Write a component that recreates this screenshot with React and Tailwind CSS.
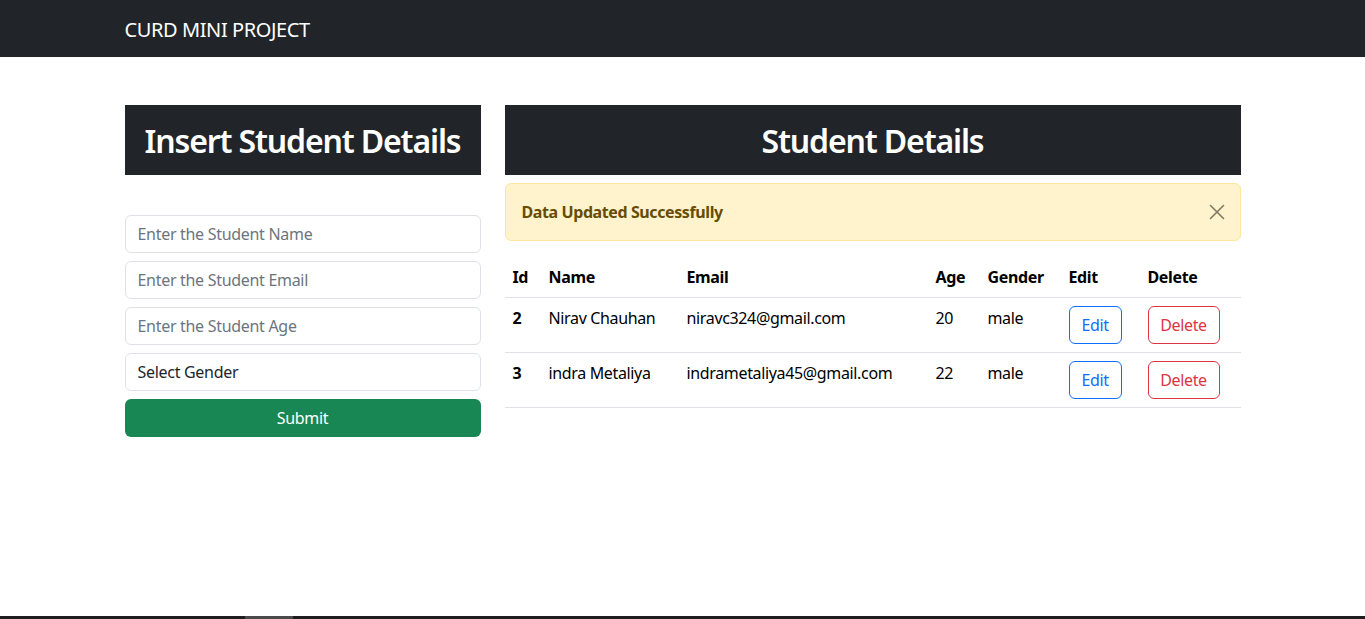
import React from "react";

function XIcon() {
  return (
    <svg width="16" height="16" viewBox="0 0 16 16" fill="none" stroke="#000" strokeWidth="1.6" strokeLinecap="round">
      <path d="M1.5 1.5 L14.5 14.5 M14.5 1.5 L1.5 14.5" />
    </svg>
  );
}

const rows = [
  { id: 2, name: "Nirav Chauhan", email: "niravc324@gmail.com", age: 20, gender: "male" },
  { id: 3, name: "indra Metaliya", email: "indrametaliya45@gmail.com", age: 22, gender: "male" },
];

export default function App() {
  return (
    <div className="flex min-h-screen flex-col bg-white text-[#212529] font-['Noto_Sans',sans-serif]">
      <nav className="h-[57px] bg-[#212529] flex items-center">
        <div className="w-[1116px] mx-auto pt-[2px]">
          <span className="text-white text-[20px] leading-[30px] tracking-[-0.4px]">CURD MINI PROJECT</span>
        </div>
      </nav>

      <main className="w-[1116px] mx-auto mt-12 flex gap-6">
        <section className="w-[356px] shrink-0">
          <div className="h-[70px] bg-[#212529] flex items-center justify-center">
            <h1 className="text-white text-[32px] font-semibold leading-none tracking-[-1.15px] whitespace-nowrap pt-[2px]">Insert Student Details</h1>
          </div>
          <form className="mt-10 flex flex-col gap-2">
            <input
              className="h-[38px] w-full rounded-md border border-[#dee2e6] px-3 text-[16px] placeholder:text-[#6c757d] tracking-[-0.3px]"
              placeholder="Enter the Student Name"
            />
            <input
              className="h-[38px] w-full rounded-md border border-[#dee2e6] px-3 text-[16px] placeholder:text-[#6c757d] tracking-[-0.3px]"
              placeholder="Enter the Student Email"
            />
            <input
              className="h-[38px] w-full rounded-md border border-[#dee2e6] px-3 text-[16px] placeholder:text-[#6c757d] tracking-[-0.3px]"
              placeholder="Enter the Student Age"
            />
            <div className="h-[38px] w-full rounded-md border border-[#dee2e6] px-3 text-[16px] flex items-center text-[#212529] tracking-[-0.3px]">
              Select Gender
            </div>
            <button type="button" className="h-[38px] w-full rounded-md bg-[#198754] text-white text-[16px] tracking-[-0.3px]">
              Submit
            </button>
          </form>
        </section>

        <section className="w-[736px] shrink-0">
          <div className="h-[70px] bg-[#212529] flex items-center justify-center">
            <h1 className="text-white text-[32px] font-semibold leading-none tracking-[-1.15px] whitespace-nowrap pt-[2px]">Student Details</h1>
          </div>
          <div className="mt-2 h-[58px] rounded-md border border-[#ffe69c] bg-[#fff3cd] flex items-center justify-between pl-4 pr-[15px]">
            <span className="text-[#664d03] font-bold text-[16px] tracking-[-0.4px]">Data Updated Successfully</span>
            <span className="opacity-50"><XIcon /></span>
          </div>

          <table className="mt-4 w-full table-fixed border-collapse text-[16px] tracking-[-0.35px]">
            <colgroup>
              <col className="w-[36px]" />
              <col className="w-[138px]" />
              <col className="w-[249px]" />
              <col className="w-[52px]" />
              <col className="w-[81px]" />
              <col className="w-[79px]" />
              <col className="w-[101px]" />
            </colgroup>
            <thead>
              <tr className="border-b border-[#dee2e6]">
                {["Id", "Name", "Email", "Age", "Gender", "Edit", "Delete"].map((h) => (
                  <th key={h} className="text-left font-bold p-2 leading-6 text-black">{h}</th>
                ))}
              </tr>
            </thead>
            <tbody>
              {rows.map((r) => (
                <tr key={r.id} className="border-b border-[#dee2e6] align-top">
                  <td className="p-2 leading-6 font-bold text-black">{r.id}</td>
                  <td className="p-2 leading-6 text-black">{r.name}</td>
                  <td className="p-2 leading-6 text-black">{r.email}</td>
                  <td className="p-2 leading-6 text-black">{r.age}</td>
                  <td className="p-2 leading-6 text-black">{r.gender}</td>
                  <td className="p-2">
                    <button type="button" className="h-[38px] w-[53px] rounded-md border border-[#0d6efd] text-[#0d6efd] text-[16px]">Edit</button>
                  </td>
                  <td className="p-2">
                    <button type="button" className="h-[38px] w-[72px] rounded-md border border-[#dc3545] text-[#dc3545] text-[16px]">Delete</button>
                  </td>
                </tr>
              ))}
            </tbody>
          </table>
        </section>
      </main>

      <div className="mt-auto h-[3px] bg-[#1f1d1e] flex">
        <div className="ml-[245px] w-[48px] h-full bg-[#4a4a4a]" />
      </div>
    </div>
  );
}
